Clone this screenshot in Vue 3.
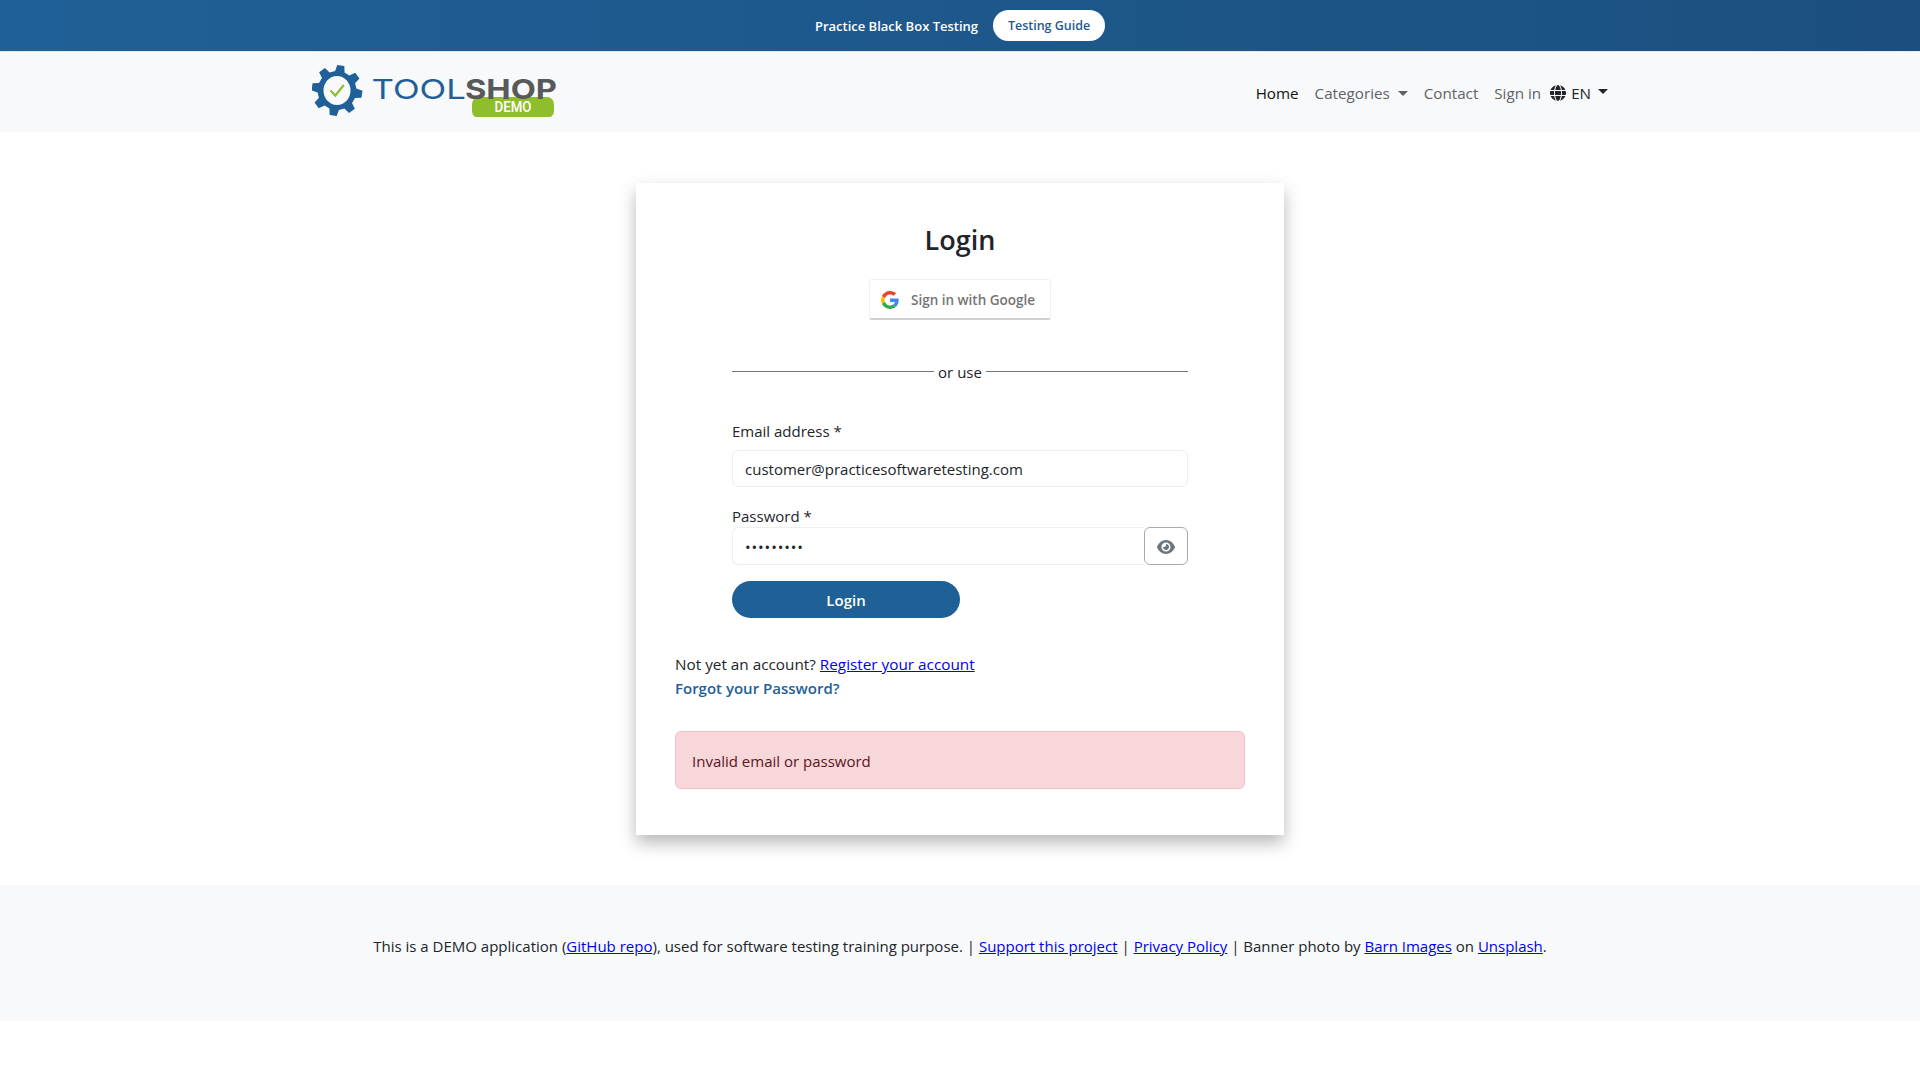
<template>
  <div class="page">
    <div class="promo">
      <span class="promo-text">Practice Black Box Testing</span>
      <a class="promo-btn" href="#">Testing Guide</a>
    </div>

    <nav class="navbar">
      <div class="container">
        <a class="brand" href="#" aria-label="Toolshop demo">
          <svg class="logo" width="246" height="52" viewBox="0 0 246 52">
            <path :d="gearPath" fill="#1f6098" />
            <ellipse cx="25" cy="25.500" rx="13.500" ry="14.500" fill="#f8f9fa" />
            <path d="M18.500 25.500l4.800 5 8.500-10.500" fill="none" stroke="#8fbe2d" stroke-width="2.200" />
            <rect x="160" y="32" width="82" height="21" rx="7" fill="#8fbe2d" />
            <text class="logo-demo" x="201" y="47" text-anchor="middle" textLength="37" lengthAdjust="spacingAndGlyphs">DEMO</text>
            <text class="logo-tool" x="59.500" y="34" textLength="94.500" lengthAdjust="spacingAndGlyphs">TOOL</text>
            <text class="logo-shop" x="153" y="34" textLength="92" lengthAdjust="spacingAndGlyphs">SHOP</text>
          </svg>
        </a>
        <ul class="nav-links">
          <li><a class="nav-link active" href="#">Home</a></li>
          <li><a class="nav-link caret" href="#">Categories</a></li>
          <li><a class="nav-link" href="#">Contact</a></li>
          <li><a class="nav-link" href="#">Sign in</a></li>
          <li>
            <a class="nav-link lang caret" href="#">
              <svg width="16" height="16" viewBox="0 0 512 512"><path fill="#212529" d="M352 256c0 22.200-1.200 43.600-3.300 64H163.300c-2.200-20.400-3.300-41.800-3.300-64s1.200-43.600 3.300-64H348.700c2.200 20.400 3.300 41.800 3.300 64zm28.800-64H503.900c5.300 20.500 8.100 41.900 8.100 64s-2.800 43.500-8.100 64H380.800c2.100-20.600 3.200-42 3.200-64s-1.100-43.400-3.200-64zm112.600-32H376.700c-10-63.900-29.800-117.400-55.300-151.600c78.300 20.700 142 77.500 171.900 151.600zm-149.100 0H167.700c6.100-36.400 15.500-68.600 27-94.700c10.500-23.600 22.200-40.700 33.500-51.500C239.400 3.200 248.700 0 256 0s16.600 3.200 27.800 13.800c11.300 10.800 23 27.900 33.500 51.500c11.600 26 20.900 58.200 27 94.700zm-209 0H18.600C48.600 85.900 112.200 29.100 190.600 8.400C165.100 42.600 145.300 96.100 135.300 160zM8.100 192H131.200c-2.100 20.600-3.200 42-3.200 64s1.100 43.400 3.200 64H8.100C2.800 299.500 0 278.100 0 256s2.800-43.500 8.100-64zM194.700 446.600c-11.600-26-20.900-58.200-27-94.600H344.300c-6.100 36.400-15.500 68.600-27 94.600c-10.500 23.600-22.200 40.700-33.500 51.500C272.600 508.800 263.300 512 256 512s-16.600-3.200-27.800-13.800c-11.300-10.800-23-27.900-33.500-51.500zM135.300 352c10 63.900 29.800 117.400 55.300 151.600C112.200 482.900 48.600 426.100 18.600 352H135.300zm358.100 0c-30 74.100-93.600 130.900-171.900 151.600c25.500-34.200 45.200-87.700 55.300-151.600H493.400z"/></svg>
              EN
            </a>
          </li>
        </ul>
      </div>
    </nav>

    <main class="main">
      <div class="card">
        <h3 class="title">Login</h3>

        <button class="google-btn" type="button">
          <svg width="18" height="18" viewBox="0 0 48 48">
            <path fill="#EA4335" d="M24 9.500c3.540 0 6.710 1.220 9.210 3.600l6.850-6.850C35.900 2.380 30.470 0 24 0 14.620 0 6.510 5.380 2.560 13.220l7.980 6.190C12.430 13.720 17.740 9.500 24 9.500z"/>
            <path fill="#4285F4" d="M46.980 24.550c0-1.570-.15-3.090-.38-4.550H24v9.020h12.940c-.58 2.960-2.260 5.480-4.780 7.180l7.730 6c4.510-4.180 7.090-10.360 7.090-17.650z"/>
            <path fill="#FBBC05" d="M10.530 28.590c-.48-1.450-.76-2.990-.76-4.590s.27-3.140.76-4.590l-7.980-6.190C.92 16.460 0 20.120 0 24c0 3.880.92 7.540 2.560 10.780l7.970-6.190z"/>
            <path fill="#34A853" d="M24 48c6.480 0 11.930-2.130 15.890-5.810l-7.730-6c-2.150 1.450-4.920 2.300-8.160 2.300-6.260 0-11.570-4.220-13.470-9.910l-7.980 6.190C6.510 42.620 14.620 48 24 48z"/>
          </svg>
          <span>Sign in with Google</span>
        </button>

        <form class="login-form" @submit.prevent>
          <div class="divider"><span>or use</span></div>

          <label class="label" for="email">Email address *</label>
          <input id="email" class="control" type="text" value="customer@practicesoftwaretesting.com" />

          <label class="label label-pass" for="password">Password *</label>
          <div class="input-group">
            <input id="password" class="control control-pass" type="password" value="welcome01" />
            <button class="eye-btn" type="button" aria-label="Show password">
              <svg width="18" height="16" viewBox="0 0 576 512"><path fill="#6c757d" d="M288 32c-80.800 0-145.500 36.800-192.600 80.600C48.600 156 17.300 208 2.500 243.700c-3.300 7.900-3.300 16.700 0 24.600C17.300 304 48.600 356 95.400 399.400C142.500 443.200 207.200 480 288 480s145.500-36.800 192.600-80.600c46.800-43.500 78.100-95.400 93-131.100c3.300-7.900 3.300-16.700 0-24.600c-14.900-35.700-46.200-87.700-93-131.100C433.500 68.800 368.800 32 288 32zM144 256a144 144 0 1 1 288 0 144 144 0 1 1 -288 0zm144-64c0 35.300-28.700 64-64 64c-7.100 0-13.900-1.200-20.300-3.100c-5.500-1.800-11.900 1.600-11.700 7.400c.3 6.900 1.300 13.800 3.200 20.700c13.700 51.200 66.400 81.600 117.600 67.900s81.600-66.400 67.900-117.600c-11.100-41.500-47.800-69.400-88.600-71.100c-5.800-.2-9.200 6.100-7.400 11.700c2.100 6.400 3.300 13.200 3.300 20.300z"/></svg>
            </button>
          </div>

          <button class="submit" type="submit">Login</button>
        </form>

        <p class="register">Not yet an account? <a href="#">Register your account</a></p>
        <a class="forgot" href="#">Forgot your Password?</a>

        <div class="alert">Invalid email or password</div>
      </div>
    </main>

    <footer class="footer">
      This is a DEMO application (<a href="#">GitHub repo</a>), used for software testing training purpose. |
      <a href="#">Support this project</a> | <a href="#">Privacy Policy</a> | Banner photo by
      <a href="#">Barn Images</a> on <a href="#">Unsplash</a>.
    </footer>
  </div>
</template>

<script setup>
// gear outline: 8 teeth around the logo hole
const buildGear = () => {
  const cx = 25, cy = 25.5, teeth = 8
  const pts = []
  for (let i = 0; i < teeth; i++) {
    const base = (i / teeth) * Math.PI * 2 - 1.42
    const step = (Math.PI * 2) / teeth
    const stops = [[-0.3, 19.5], [-0.17, 25.5], [0.17, 25.5], [0.3, 19.5]]
    for (const [off, r] of stops) {
      const a = base + off * step * 1.05
      pts.push((cx + r * Math.cos(a)).toFixed(2) + ' ' + (cy + r * Math.sin(a)).toFixed(2))
    }
  }
  return 'M' + pts.join('L') + 'Z'
}

const gearPath = buildGear()
</script>

<style scoped>
.page {
  font-family: "Open Sans", "Noto Sans", Arial, sans-serif;
  font-size: 15px;
  line-height: 24px;
  color: #212529;
  background: #fff;
}

.promo {
  height: 51px;
  display: flex;
  align-items: center;
  justify-content: center;
  gap: 15px;
  background: linear-gradient(90deg, #1f6096, #1c4f80);
  box-sizing: border-box;
}

.promo-text {
  color: #fff;
  font-size: 13px;
  font-weight: 600;
}

.promo-btn {
  display: block;
  width: 112px;
  height: 31px;
  line-height: 31px;
  text-align: center;
  background: #fff;
  color: #1f5a8e;
  border-radius: 16px;
  font-size: 12.500px;
  font-weight: 600;
  text-decoration: none;
}

.navbar {
  height: 81px;
  background: #f8f9fa;
  border-top: 1px solid #e3e8ee;
  box-sizing: border-box;
}

.container {
  width: 1296px;
  margin: 0 auto;
  display: flex;
  justify-content: space-between;
  align-items: flex-start;
}

.brand {
  display: block;
  margin-top: 13px;
}

.logo {
  display: block;
}

.logo-tool {
  font-family: "Inter", sans-serif;
  font-size: 27.500px;
  font-weight: 400;
  fill: #1f6098;
}

.logo-shop {
  font-family: "Inter", sans-serif;
  font-size: 27.500px;
  font-weight: 700;
  fill: #58595b;
}

.logo-demo {
  font-family: "Roboto", sans-serif;
  font-size: 14px;
  font-weight: 500;
  fill: #fff;
}

.nav-links {
  list-style: none;
  margin: 0;
  padding: 0;
  display: flex;
  align-items: center;
  margin-top: 29px;
  font-size: 15.200px;
}

.nav-link {
  display: block;
  padding: 0 8px;
  color: #5f6266;
  text-decoration: none;
  white-space: nowrap;
}

.nav-link.active,
.lang {
  color: #212529;
}

.nav-link.active {
  color: #111;
}

.caret::after {
  content: "";
  display: inline-block;
  margin-left: 8px;
  vertical-align: 3px;
  border-top: 5px solid currentColor;
  border-left: 5px solid transparent;
  border-right: 5px solid transparent;
}

.lang {
  display: flex;
  align-items: center;
  gap: 5px;
  padding: 0 0 0 1px;
}

.lang::after {
  margin-left: 2px;
  margin-bottom: 3px;
}

.main {
  padding: 51px 0 50px;
}

.card {
  width: 648px;
  height: 652px;
  margin: 0 auto;
  padding: 40px 39px 0;
  box-sizing: border-box;
  background: #fff;
  box-shadow: 0 8px 16px rgba(0, 0, 0, 0.28);
}

.title {
  margin: 0;
  text-align: center;
  font-size: 27px;
  line-height: 34px;
  font-weight: 600;
  color: #212529;
}

.google-btn {
  display: flex;
  align-items: center;
  gap: 12px;
  width: 182px;
  height: 41px;
  margin: 22px auto 0;
  padding: 1px 11px 0;
  box-sizing: border-box;
  background: #fff;
  border: 1px solid #f2f2f2;
  border-bottom: 2px solid #d0d0d0;
  border-radius: 3px;
  color: #757575;
  font-family: inherit;
  font-size: 13.500px;
  font-weight: 600;
}

.login-form {
  margin: 0 57px;
  display: flex;
  flex-direction: column;
  align-items: flex-start;
}

.divider {
  width: 100%;
  margin-top: 39px;
  display: flex;
  align-items: center;
  gap: 4px;
  height: 26px;
}

.divider::before,
.divider::after {
  content: "";
  flex: 1;
  height: 1px;
  margin-bottom: 1px;
  background: #6c757d;
}

.label {
  margin-top: 34px;
  height: 24px;
}

.label-pass {
  margin-top: 17px;
}

.control {
  display: block;
  width: 100%;
  height: 37px;
  margin-top: 7px;
  padding: 0 12px;
  box-sizing: border-box;
  border: 1px solid #eceef0;
  border-radius: 6px;
  font-family: inherit;
  font-size: 15px;
  color: #212529;
  outline: none;
  background: #fff;
}

.input-group {
  width: 100%;
  display: flex;
  margin-top: -1px;
}

.control-pass {
  flex: 1;
  height: 38px;
  margin-top: 0;
  padding-top: 2px;
  border-radius: 6px 0 0 6px;
  border-right: 0;
  letter-spacing: 0.900px;
}

.eye-btn {
  width: 44px;
  height: 38px;
  padding: 1px 0 0;
  display: flex;
  align-items: center;
  justify-content: center;
  background: #fff;
  border: 1px solid #a5abb1;
  border-radius: 6px;
}

.submit {
  width: 228px;
  height: 37px;
  margin-top: 16px;
  background: #1f6096;
  color: #fff;
  border: 0;
  border-radius: 19px;
  font-family: inherit;
  font-size: 15px;
  font-weight: 600;
}

.register {
  margin: 34px 0 0;
  font-size: 15.300px;
}

.register a,
.footer a {
  color: #0000ee;
}

.forgot {
  display: block;
  color: #1f6096;
  font-weight: 600;
  text-decoration: none;
}

.alert {
  height: 58px;
  margin-top: 31px;
  padding: 1px 16px 0;
  box-sizing: border-box;
  display: flex;
  align-items: center;
  background: #f8d7da;
  border: 1px solid #f5c2c7;
  border-radius: 6px;
  color: #58151c;
}

.footer {
  height: 136px;
  padding-top: 49px;
  box-sizing: border-box;
  background: #f8f9fa;
  text-align: center;
}
</style>

<style>
body {
  background: #fff;
}
</style>
